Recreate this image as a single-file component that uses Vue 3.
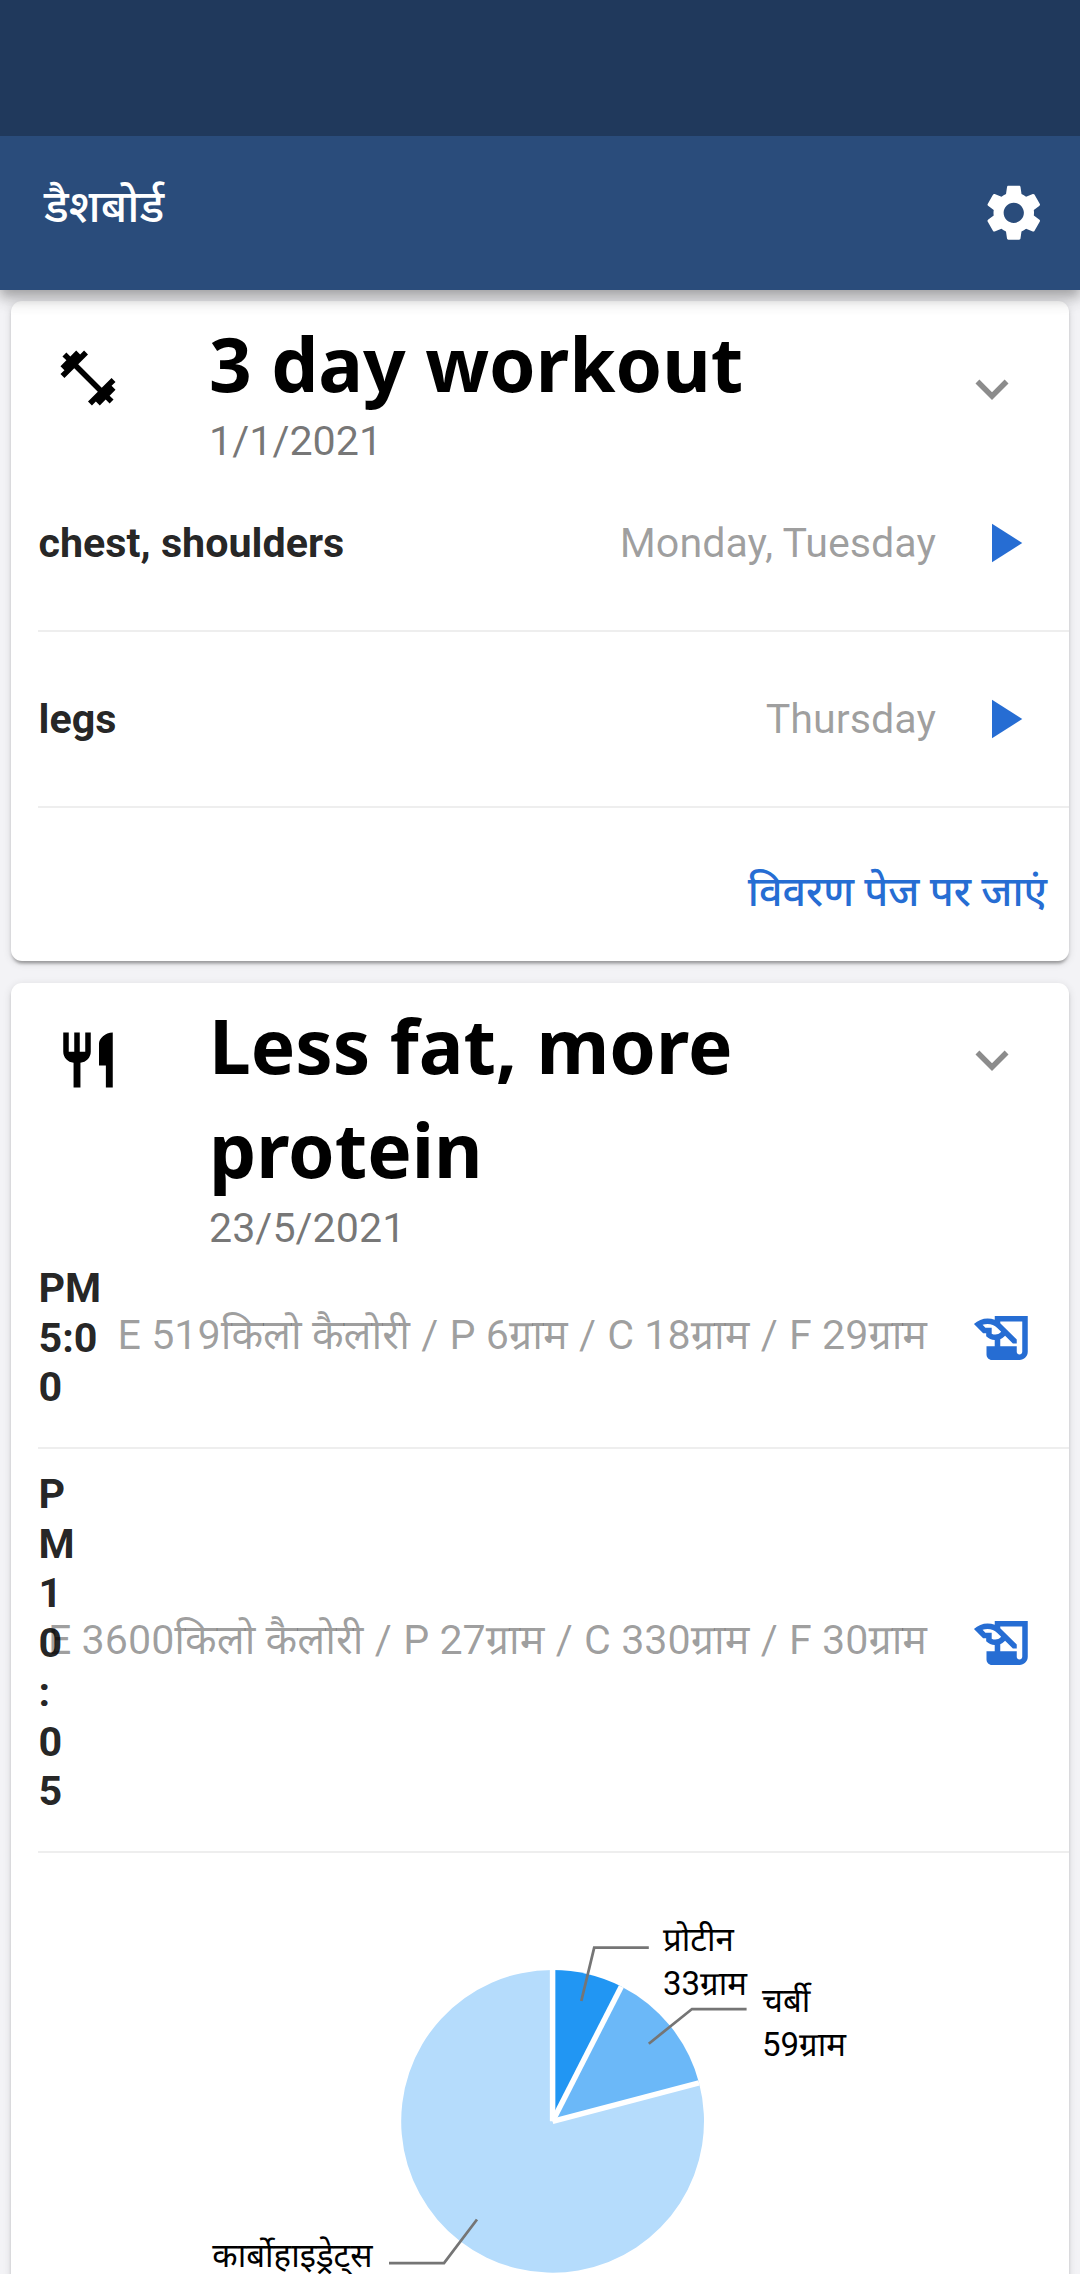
<script setup>
const workouts = [
  { name: 'chest, shoulders', days: 'Monday, Tuesday' },
  { name: 'legs', days: 'Thursday' },
]

const meals = [
  { time: 'PM 5:00', width: 66, height: 206, info: ['E 519किलो कैलोरी', 'P 6ग्राम', 'C 18ग्राम', 'F 29ग्राम'] },
  { time: 'PM 10:05', width: 6, height: 404, info: ['E 3600किलो कैलोरी', 'P 27ग्राम', 'C 330ग्राम', 'F 30ग्राम'] },
]

const icons = {
  settings:
    'M19.14,12.94c0.04-0.3,0.06-0.61,0.06-0.94c0-0.32-0.02-0.64-0.07-0.94l2.03-1.58c0.18-0.14,0.23-0.41,0.12-0.61l-1.92-3.32c-0.12-0.22-0.37-0.29-0.59-0.22l-2.39,0.96c-0.5-0.38-1.03-0.7-1.62-0.94L14.4,2.81c-0.04-0.24-0.24-0.41-0.48-0.41h-3.84c-0.24,0-0.43,0.17-0.47,0.41L9.25,5.35C8.66,5.59,8.12,5.92,7.63,6.29L5.24,5.33c-0.22-0.08-0.47,0-0.59,0.22L2.74,8.87C2.62,9.08,2.66,9.34,2.86,9.48l2.03,1.58C4.84,11.36,4.8,11.69,4.8,12s0.02,0.64,0.07,0.94l-2.03,1.58c-0.18,0.14-0.23,0.41-0.12,0.61l1.92,3.32c0.12,0.22,0.37,0.29,0.59,0.22l2.39-0.96c0.5,0.38,1.03,0.7,1.62,0.94l0.36,2.54c0.05,0.24,0.24,0.41,0.48,0.41h3.84c0.24,0,0.44-0.17,0.47-0.41l0.36-2.54c0.59-0.24,1.13-0.56,1.62-0.94l2.39,0.96c0.22,0.08,0.47,0,0.59-0.22l1.92-3.32c0.12-0.22,0.07-0.47-0.12-0.61L19.14,12.94z M12,15.6c-1.98,0-3.6-1.62-3.6-3.6s1.62-3.6,3.6-3.6s3.6,1.62,3.6,3.6S13.98,15.6,12,15.6z',
  dumbbell:
    'M20.57 14.86L22 13.43 20.57 12 17 15.57 8.43 7 12 3.43 10.57 2 9.14 3.43 7.71 2 5.57 4.14 4.14 2.71 2.71 4.14l1.43 1.43L2 7.71l1.43 1.43L2 10.57 3.43 12 7 8.43 15.57 17 12 20.57 13.43 22l1.43-1.43L16.29 22l2.14-2.14 1.43 1.43 1.43-1.43-1.43-1.43L22 16.29z',
  restaurant:
    'M11 9H9V2H7v7H5V2H3v7c0 2.12 1.66 3.84 3.75 3.97V22h2.5v-9.03C11.34 12.84 13 11.12 13 9V2h-2v7zm5-3v8h2.5v8H21V2c-2.76 0-5 2.24-5 4z',
  expand: 'M16.59 8.59L12 13.17 7.41 8.59 6 10l6 6 6-6z',
  play: 'M8 5v14l11-7z',
  log: 'M9,4v1.38c-0.83-0.33-1.72-0.5-2.61-0.5c-1.79,0-3.58,0.68-4.95,2.05l3.33,3.33h1.11v1.11c0.86,0.86,1.98,1.31,3.11,1.36V15H6v3c0,1.1,0.9,2,2,2h10c1.66,0,3-1.34,3-3V4H9z M7.89,10.41V8.26H5.61L4.57,7.22C5.14,7,5.76,6.88,6.39,6.88c1.34,0,2.59,0.52,3.54,1.46l1.41,1.41l-0.2,0.2c-0.51,0.51-1.19,0.8-1.92,0.8C8.75,10.75,8.29,10.63,7.89,10.41z M19,17c0,0.55-0.45,1-1,1s-1-0.45-1-1v-2h-6v-2.59c0.57-0.23,1.1-0.57,1.56-1.03l0.2-0.2L15.59,14H17v-1.41l-6-5.97V6h8V17z',
}

// Pie geometry, in the chart's own coordinates
const cx = 541.6
const cy = 268.3
const r = 151.4
const slices = [
  { grams: 33, color: '#2196f3' },
  { grams: 59, color: '#6bb8f8' },
  { grams: 348, color: '#b5dcfc' },
]
const total = slices.reduce((sum, s) => sum + s.grams, 0)
const point = (angle) => [cx + r * Math.sin(angle), cy - r * Math.cos(angle)]
let angle = 0
for (const s of slices) {
  const start = point(angle)
  s.edge = start
  const sweep = (s.grams / total) * 2 * Math.PI
  angle += sweep
  const end = point(angle)
  s.path = `M${cx} ${cy}L${start}A${r} ${r} 0 ${sweep > Math.PI ? 1 : 0} 1 ${end}Z`
}
</script>

<template>
  <div class="screen">
    <div class="status-bar"></div>
    <header class="app-bar">
      <h1>डैशबोर्ड</h1>
      <svg class="icon gear" viewBox="0 0 24 24"><path :d="icons.settings" /></svg>
    </header>
    <main>
      <section class="card workout-card">
        <div class="head">
          <svg class="icon lead" viewBox="0 0 24 24"><path :d="icons.dumbbell" /></svg>
          <div class="titles">
            <h2>3 day workout</h2>
            <p>1/1/2021</p>
          </div>
          <svg class="icon chevron low" viewBox="0 0 24 24"><path :d="icons.expand" /></svg>
        </div>
        <div v-for="w in workouts" :key="w.name" class="row">
          <span class="name">{{ w.name }}</span>
          <span class="info days">{{ w.days }}</span>
          <svg class="icon action" viewBox="0 0 24 24"><path :d="icons.play" /></svg>
        </div>
        <div class="footer"><a>विवरण पेज पर जाएं</a></div>
      </section>

      <section class="card meal-card">
        <div class="head tall">
          <svg class="icon lead" viewBox="0 0 24 24"><path :d="icons.restaurant" /></svg>
          <div class="titles">
            <h2>Less fat, more protein</h2>
            <p>23/5/2021</p>
          </div>
          <svg class="icon chevron" viewBox="0 0 24 24"><path :d="icons.expand" /></svg>
        </div>
        <div v-for="m in meals" :key="m.time" class="row meal" :style="{ height: m.height + 'px' }">
          <span class="name time" :style="{ width: m.width + 'px' }">{{ m.time }}</span>
          <span class="info"><template v-for="(part, i) in m.info" :key="part"><span v-if="i" class="slash">&nbsp;/&nbsp;</span>{{ part }}</template></span>
          <svg class="icon action" viewBox="0 0 24 24"><path :d="icons.log" /></svg>
        </div>
        <svg class="chart" width="1058" height="421" viewBox="0 0 1058 421">
          <path v-for="s in slices" :key="s.grams" :d="s.path" :fill="s.color" />
          <line
            v-for="s in slices"
            :key="s.color"
            :x1="cx"
            :y1="cy"
            :x2="s.edge[0]"
            :y2="s.edge[1]"
            stroke="#fff"
            stroke-width="5.5"
          />
          <g fill="none" stroke="#757575" stroke-width="2.75">
            <path d="M570.3 148L583.2 94.6H637.8" />
            <path d="M637.8 190.7L681 156H735.6" />
            <path d="M466 366.5L433 410H378" />
          </g>
          <text x="652" y="98">प्रोटीन</text>
          <text x="652" y="142">33ग्राम</text>
          <text x="751" y="159">चर्बी</text>
          <text x="751" y="203">59ग्राम</text>
          <text x="361.5" y="414" text-anchor="end">कार्बोहाइड्रेट्स</text>
        </svg>
      </section>
    </main>
  </div>
</template>

<style>
body {
  margin: 0;
}
</style>

<style scoped>
.screen {
  width: 1080px;
  height: 2274px;
  overflow: hidden;
  display: flex;
  flex-direction: column;
  background: #f3f3f6;
  font-family: Roboto, 'Noto Sans Devanagari', 'Noto Sans', sans-serif;
  font-size: 41.25px;
}
.status-bar {
  height: 136px;
  flex: none;
  background: #20395c;
  position: relative;
  z-index: 2;
}
.app-bar {
  height: 154px;
  flex: none;
  display: flex;
  align-items: center;
  justify-content: space-between;
  padding: 0 32.5px 0 44px;
  box-sizing: border-box;
  background: #2a4c7b;
  box-shadow: 0 5px 11px rgba(0, 0, 0, 0.2), 0 11px 14px rgba(0, 0, 0, 0.14), 0 3px 27px rgba(0, 0, 0, 0.06);
  z-index: 1;
}
h1 {
  margin: 0 0 12px;
  color: #fff;
  font-size: 45.4px;
  font-weight: 500;
  line-height: 50px;
}
.icon {
  width: 66px;
  height: 66px;
  flex: none;
}
.gear {
  width: 67.5px;
  height: 67.5px;
  fill: #fff;
}
main {
  flex: 1;
  min-height: 0;
  padding: 11px;
  display: flex;
  flex-direction: column;
  gap: 22px;
}
.card {
  flex: none;
  background: #fff;
  border-radius: 11px;
  box-shadow: 0 5px 3px -3px rgba(0, 0, 0, 0.2), 0 3px 3px rgba(0, 0, 0, 0.14), 0 2px 8px rgba(0, 0, 0, 0.12);
}
.workout-card {
  height: 660px;
}
.meal-card {
  height: 1400px;
}
.head {
  height: 155px;
  box-sizing: border-box;
  display: flex;
  align-items: flex-start;
  padding: 9px 44px 0;
}
.head.tall {
  height: 260px;
}
.lead {
  margin-top: 35px;
}
.titles {
  flex: 1;
  margin: 1px 0 0 88px;
}
h2 {
  margin: 0;
  font: 700 74.7px/104px 'Noto Sans', sans-serif;
  color: #000;
}
p {
  margin: 0;
  line-height: 53px;
  color: rgba(0, 0, 0, 0.54);
}
.tall p {
  line-height: 55px;
}
.chevron {
  margin-top: 35px;
  fill: #8c8c8c;
}
.chevron.low {
  margin-top: 46px;
}
.row {
  height: 176px;
  box-sizing: border-box;
  margin-left: 27px;
  padding-right: 33px;
  display: flex;
  align-items: center;
  border-bottom: 2px solid #eee;
}
.row.meal {
  padding-bottom: 15px;
}
.name {
  flex: none;
  padding: 2px 0 0 0.5px;
  font-weight: 700;
  line-height: 49.5px;
  color: rgba(0, 0, 0, 0.87);
}
.time {
  word-break: break-all;
  line-break: anywhere;
}
.info {
  margin-left: auto;
  padding-top: 2px;
  white-space: nowrap;
  color: rgba(0, 0, 0, 0.38);
}
.info.days {
  padding-top: 0;
}
.slash {
  margin: 0 1.1px;
}
.action {
  margin-left: 43px;
  fill: #266dd3;
}
.days + .action {
  margin-left: 34px;
}
.footer {
  padding: 59px 22px 0 0;
  text-align: right;
}
.footer a {
  color: #266dd3;
  font-weight: 500;
  line-height: 50px;
}
.chart {
  display: block;
}
.chart text {
  font-size: 33px;
  fill: #000;
}
</style>
